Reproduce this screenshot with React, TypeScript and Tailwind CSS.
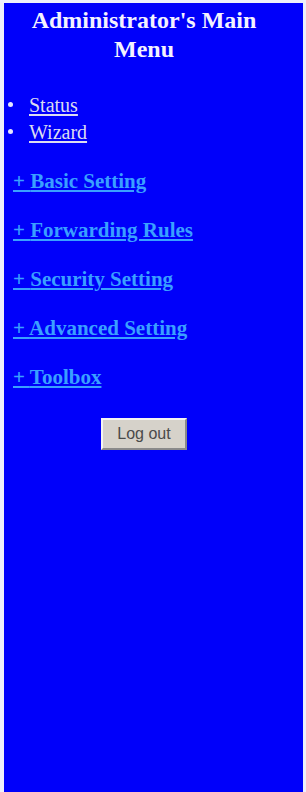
const sections = ["Basic Setting", "Forwarding Rules", "Security Setting", "Advanced Setting", "Toolbox"];

export default function App() {
  return (
    <div className="h-[792px] w-[306px] bg-[#eef0fb] pl-[4px] pr-[3px] pt-[3px] overflow-hidden">
      <div className="h-full bg-[#0000fa] font-['Liberation_Serif',serif]">
        <h1 className="ml-[14px] w-[252px] pt-[3px] text-center text-[24px] font-bold leading-[29px] text-[#f4f2ff]">
          Administrator's Main Menu
        </h1>

        <ul className="mt-[27px] flex flex-col">
          {["Status", "Wizard"].map((item) => (
            <li key={item} className="flex h-[27px] items-center">
              <span className="ml-[4px] mr-[16px] size-[5px] rounded-full bg-[#e6e6ff]" />
              <a href="#" className="text-[20px] leading-none text-[#dcdcf0] underline underline-offset-2">
                {item}
              </a>
            </li>
          ))}
        </ul>

        <div className="mt-[12px] flex flex-col">
          {sections.map((s) => (
            <div key={s} className="flex h-[49px] items-center pl-[9px]">
              <a href="#" className="text-[21px] font-bold leading-none text-[#3aa0ff] underline underline-offset-2">
                + {s}
              </a>
            </div>
          ))}
        </div>

        <div className="mt-[16px] flex w-[280px] justify-center">
          <button className="h-[32px] w-[86px] border-2 border-t-[#f4f4f4] border-l-[#f4f4f4] border-r-[#8a8a8a] border-b-[#8a8a8a] bg-[#d6d2ca] font-['Liberation_Sans',sans-serif] text-[16px] text-[#4a4a4a]">
            Log out
          </button>
        </div>
      </div>
    </div>
  );
}
